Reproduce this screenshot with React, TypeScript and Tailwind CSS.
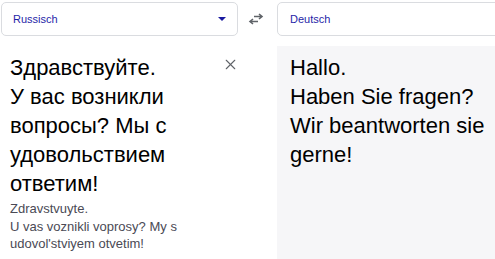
import { X } from "lucide-react";

function Caret() {
  return (
    <svg width="8" height="4" viewBox="0 0 8 4" className="block">
      <path d="M0 0h8L4 4z" fill="#1a1aa0" />
    </svg>
  );
}

function SwapIcon() {
  return (
    <svg width="16" height="12" viewBox="0 0 16 12" className="block">
      <path d="M6 3.5h8M11 1l3 2.5-3 2.5" stroke="#5f6368" strokeWidth="1.6" fill="none" />
      <path d="M10 8.5H2M5 6l-3 2.5L5 11" stroke="#5f6368" strokeWidth="1.6" fill="none" />
    </svg>
  );
}

export default function App() {
  return (
    <div
      className="w-[495px] h-[259px] overflow-hidden bg-white flex flex-col"
      style={{ fontFamily: '"Liberation Sans", Arial, sans-serif' }}
    >
      {/* language bar */}
      <div className="flex items-stretch pt-[2px] pl-[1px] h-[36px] shrink-0">
        <div className="w-[237px] flex items-center justify-between border border-[#dadce0] rounded-[5px] pl-[11px] pr-[11px]">
          <span className="text-[11px] text-[#1f1fa8]">Russisch</span>
          <Caret />
        </div>
        <div className="w-[39px] flex items-center justify-center pr-[4px]">
          <SwapIcon />
        </div>
        <div className="flex-1 -mr-[10px] flex items-center border border-[#dadce0] rounded-[5px] pl-[12px]">
          <span className="text-[11px] text-[#1f1fa8]">Deutsch</span>
        </div>
      </div>

      {/* text panels */}
      <div className="flex flex-1 mt-[10px]">
        <div className="w-[277px] shrink-0 relative pl-[10px] pt-[7px]">
          <p className="text-[22px] leading-[29px] text-black">
            Здравствуйте.
            <br />
            У вас возникли
            <br />
            вопросы? Мы с
            <br />
            удовольствием
            <br />
            ответим!
          </p>
          <p className="text-[13px] leading-[17.5px] text-[#4a4a55] pt-[2px]">
            Zdravstvuyte.
            <br />
            U vas voznikli voprosy? My s
            <br />
            udovol'stviyem otvetim!
          </p>
          <X size={17} strokeWidth={1.5} className="absolute left-[222px] top-[10px] text-[#5f6368]" />
        </div>
        <div className="flex-1 bg-[#f6f6f8] pl-[13px] pt-[7px]">
          <p className="text-[22px] leading-[29px] text-black">
            Hallo.
            <br />
            Haben Sie fragen?
            <br />
            Wir beantworten sie
            <br />
            gerne!
          </p>
        </div>
      </div>
    </div>
  );
}
